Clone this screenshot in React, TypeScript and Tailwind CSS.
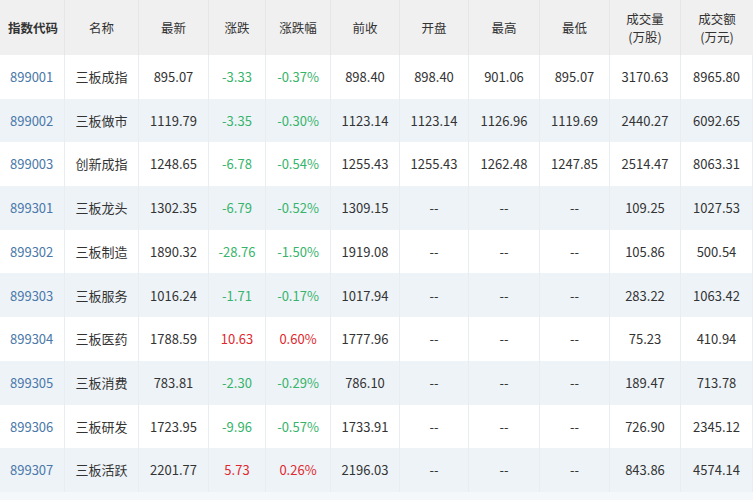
const rows = [
["899001","三板成指","895.07","-3.33","-0.37%","898.40","898.40","901.06","895.07","3170.63","8965.80"],
["899002","三板做市","1119.79","-3.35","-0.30%","1123.14","1123.14","1126.96","1119.69","2440.27","6092.65"],
["899003","创新成指","1248.65","-6.78","-0.54%","1255.43","1255.43","1262.48","1247.85","2514.47","8063.31"],
["899301","三板龙头","1302.35","-6.79","-0.52%","1309.15","--","--","--","109.25","1027.53"],
["899302","三板制造","1890.32","-28.76","-1.50%","1919.08","--","--","--","105.86","500.54"],
["899303","三板服务","1016.24","-1.71","-0.17%","1017.94","--","--","--","283.22","1063.42"],
["899304","三板医药","1788.59","10.63","0.60%","1777.96","--","--","--","75.23","410.94"],
["899305","三板消费","783.81","-2.30","-0.29%","786.10","--","--","--","189.47","713.78"],
["899306","三板研发","1723.95","-9.96","-0.57%","1733.91","--","--","--","726.90","2345.12"],
["899307","三板活跃","2201.77","5.73","0.26%","2196.03","--","--","--","843.86","4574.14"],
];
const heads = ["指数代码","名称","最新","涨跌","涨跌幅","前收","开盘","最高","最低","成交量\n(万股)","成交额\n(万元)"];
const cols = "grid-cols-[65px_74px_70px_57px_65px_69px_69px_71px_70px_71px_1fr]";
export default function App() {
  return (
    <div className="w-[753px] h-[500px] bg-[#f5f8fb] text-[13px] text-[#333]" style={{fontFamily:'"Noto Sans CJK SC","Noto Sans",sans-serif'}}>
      <div className={`grid ${cols} h-[55px] bg-[#f0f0f0]`}>
        {heads.map((h,i)=>(
          <div key={i} className={`flex items-center ${i===0?'pl-[8px] font-bold':'justify-center'} border-r border-[#e6e6e6] last:border-r-0 whitespace-pre text-center leading-[18px] text-[12.5px]`}>{h}</div>
        ))}
      </div>
      {rows.map((r,ri)=>(
        <div key={ri} className={`grid ${cols} h-[43.7px] ${ri%2? 'bg-[#eef3f8]':'bg-white'}`}>
          {r.map((c,i)=>{
            let color="";
            if(i===0) color="text-[#4a78a8]";
            if(i===3||i===4) color = c.startsWith("-")?"text-[#36b46a]":"text-[#e0282e]";
            return <div key={i} className={`flex items-center ${i===0?'pl-[10px]':'justify-center'} ${color} border-r border-[#e8edf2]`}>{c}</div>;
          })}
        </div>
      ))}
    </div>
  );
}
